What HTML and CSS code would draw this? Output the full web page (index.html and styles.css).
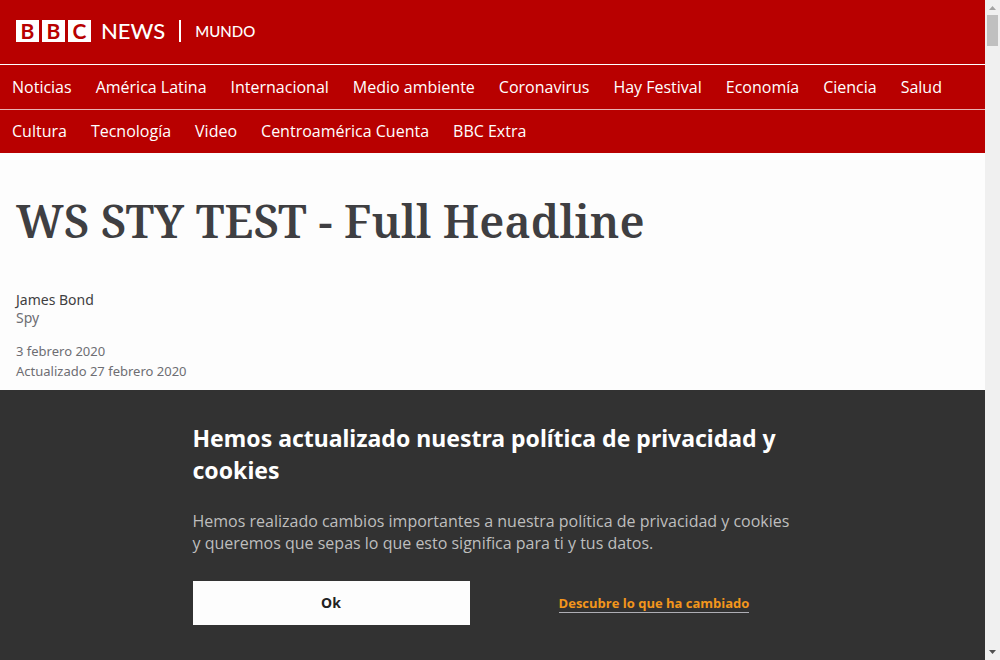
FILE: index.html
```html
<!DOCTYPE html>
<html lang="es">
<head>
<meta charset="utf-8">
<meta name="viewport" content="width=device-width, initial-scale=1">
<title>WS STY TEST - Full Headline - BBC News Mundo</title>
<link rel="stylesheet" href="styles.css">
</head>
<body>
<div class="window">
  <div class="page">
    <header class="header">
      <div class="brand">
        <a class="logo" href="#" aria-label="BBC News Mundo">
          <span class="blocks"><span class="block">B</span><span class="block">B</span><span class="block">C</span></span>
          <span class="news">NEWS</span>
          <span class="divider"></span>
          <span class="service">MUNDO</span>
        </a>
      </div>
      <nav>
        <ul class="nav">
          <li><a href="#">Noticias</a></li>
          <li><a href="#">América Latina</a></li>
          <li><a href="#">Internacional</a></li>
          <li><a href="#">Medio ambiente</a></li>
          <li><a href="#">Coronavirus</a></li>
          <li><a href="#">Hay Festival</a></li>
          <li><a href="#">Economía</a></li>
          <li><a href="#">Ciencia</a></li>
          <li><a href="#">Salud</a></li>
          <li><a href="#">Cultura</a></li>
          <li><a href="#">Tecnología</a></li>
          <li><a href="#">Video</a></li>
          <li><a href="#">Centroamérica Cuenta</a></li>
          <li><a href="#">BBC Extra</a></li>
        </ul>
      </nav>
    </header>
    <main class="article">
      <h1 class="headline">WS STY TEST - Full Headline</h1>
      <div class="byline">
        <p class="author">James Bond</p>
        <p class="role">Spy</p>
      </div>
      <div class="dates">
        <time datetime="2020-02-03">3 febrero 2020</time>
        <time datetime="2020-02-27">Actualizado 27 febrero 2020</time>
      </div>
    </main>
    <section class="consent" aria-labelledby="consent-title">
      <div class="consent-inner">
        <h2 class="consent-title" id="consent-title">Hemos actualizado nuestra política de privacidad y cookies</h2>
        <p class="consent-text">Hemos realizado cambios importantes a nuestra política de privacidad y cookies y&nbsp;queremos que sepas lo que esto significa para ti y tus datos.</p>
        <div class="actions">
          <button class="accept" type="button">Ok</button>
          <div class="more"><a class="more-link" href="#">Descubre lo que ha cambiado</a></div>
        </div>
      </div>
    </section>
  </div>
  <div class="scrollbar" aria-hidden="true">
    <svg class="arrow" viewBox="0 0 15 15"><path d="M4 10 7.500 6 11 10z" fill="#a3a3a3"/></svg>
    <div class="thumb"></div>
    <svg class="arrow arrow-down" viewBox="0 0 15 15"><path d="M4 5 11 5 7.500 9z" fill="#505050"/></svg>
  </div>
</div>
</body>
</html>
```
FILE: styles.css
```css
* { box-sizing: border-box; }

body {
  margin: 0;
  background: #fdfdfd;
  font-family: "Noto Sans", sans-serif;
  font-size: 16px;
}

h1, h2, p, ul { margin: 0; padding: 0; }
a { color: inherit; text-decoration: none; }

.window {
  display: grid;
  grid-template-columns: 1fr 15px;
  min-height: 100vh;
}

.page {
  display: flex;
  flex-direction: column;
  min-width: 0;
}

.header { background: #b80000; color: #fff; }

.brand {
  padding: 20px 16px 22px;
  border-bottom: 1px solid #fff;
}

.logo {
  display: flex;
  align-items: center;
  height: 22px;
  font-family: Lato, sans-serif;
  font-weight: 500;
}

.blocks { display: flex; gap: 3px; }

.block {
  width: 23px;
  height: 22px;
  background: #fff;
  color: #b80000;
  font-size: 21px;
  font-weight: 700;
  line-height: 22px;
  text-align: center;
}

.news { margin-left: 10px; font-size: 22px; line-height: 22px; }

.divider {
  width: 2px;
  height: 22px;
  margin: 0 14px;
  background: #fff;
}

.service { font-size: 15px; line-height: 22px; }

.nav {
  display: flex;
  flex-wrap: wrap;
  column-gap: 24px;
  padding: 0 12px;
  font-family: "Open Sans", "Noto Sans", sans-serif;
  list-style: none;
  line-height: 44px;
  background: linear-gradient(#eab2b2, #eab2b2) 0 44px / 100% 1px no-repeat;
}

.article { padding: 40px 16px 8px; }

.headline {
  color: #3f3f42;
  font-family: "Noto Serif", "DejaVu Serif", serif;
  font-size: 45px;
  font-weight: 600;
  line-height: 56px;
}

.byline {
  margin-top: 42px;
  color: #6e6e73;
  font-size: 14px;
  line-height: 18px;
}

.author { color: #3f3f42; }

.dates {
  display: flex;
  flex-direction: column;
  margin-top: 14px;
  color: #6e6e73;
  font-size: 13px;
  line-height: 20px;
}

.consent {
  margin-top: auto;
  padding: 32px 16px 35px;
  background: #323232;
  font-family: "Open Sans", "Noto Sans", sans-serif;
}

.consent-inner { max-width: 600px; margin: 0 auto; }

.consent-title {
  color: #fff;
  font-family: "Noto Sans", sans-serif;
  font-size: 23px;
  font-weight: 700;
  line-height: 32px;
}

.consent-text {
  margin-top: 24px;
  color: #bebebe;
  font-size: 16px;
  line-height: 22px;
}

.actions {
  display: grid;
  grid-template-columns: 277px 1fr;
  gap: 46px;
  align-items: center;
  margin-top: 27px;
}

.accept {
  height: 44px;
  padding: 0 0 2px;
  border: 0;
  background: #fdfdfd;
  color: #222;
  font: 700 14px "Noto Sans", sans-serif;
}

.more {
  font-size: 13px;
  line-height: 20px;
  text-align: center;
}

.more-link {
  color: #f3961c;
  border-bottom: 1px solid #aeaeb5;
  font-weight: 700;
}

.scrollbar {
  display: flex;
  flex-direction: column;
  align-items: center;
  background: #f0f0f0;
}

.arrow { width: 15px; height: 15px; }
.arrow-down { margin-top: auto; }
.thumb { width: 11px; height: 31px; background: #c0c0c0; }
```
